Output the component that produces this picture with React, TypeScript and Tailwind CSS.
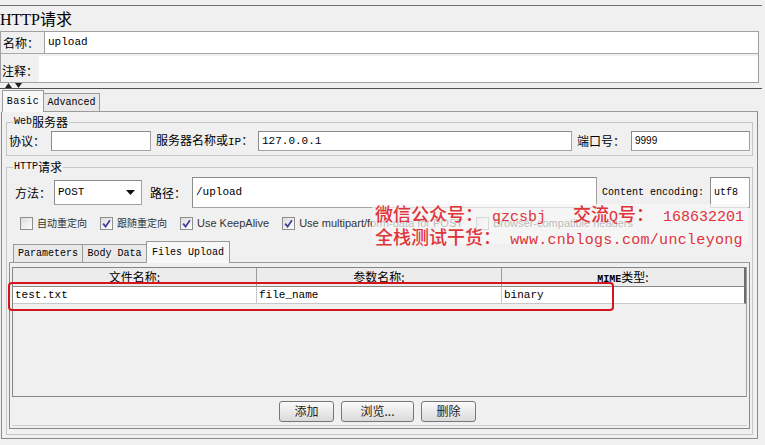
import React from "react";

const mono = "font-['Liberation_Mono','Noto_Sans_CJK_SC',monospace]";
const input = "bg-white border border-[#a3a3a3] border-t-[#8c8c8c] border-l-[#8c8c8c]";

function Check({ checked }: { checked?: boolean }) {
  return (
    <span className="w-[13px] h-[13px] shrink-0 border border-[#8e8f8f] bg-linear-to-br from-[#dcdcdc] to-white flex items-center justify-center">
      {checked && (
        <svg width="9" height="9" viewBox="0 0 9 9">
          <path d="M1.2 4.6 L3.6 7.6 L7.9 1.2" fill="none" stroke="#3c3c94" strokeWidth="1.7" />
        </svg>
      )}
    </span>
  );
}

function Button({ label, wide }: { label: string; wide?: boolean }) {
  return (
    <div
      className={`h-[21px] ${wide ? "w-[73px]" : "w-[55px]"} rounded-[3px] border border-[#777] bg-linear-to-b from-[#fafafa] to-[#dadada] flex items-center justify-center text-[12px] leading-none text-[#222]`}
    >
      {label}
    </div>
  );
}

export default function App() {
  return (
    <div className="w-[765px] h-[445px] bg-[#f0f0f0] overflow-hidden relative text-black text-[12px] font-['Noto_Sans_CJK_SC',sans-serif]">
      <div className="h-[5px]" />
      <div className="mr-[3px] border-t border-[#6f6f6f]">
        <div className="h-[25px] text-[16px] leading-[25px]">
          <span className="font-['Liberation_Serif',serif]">HTTP</span>请求
        </div>

        {/* name / comment */}
        <div className="mr-[3px] border-t border-r border-l border-[#a0a0a0]">
          <div className="flex h-[22px] border-b border-[#a8a8a8]">
            <div className="w-[43px] pl-[2px] leading-[22px] whitespace-nowrap">名称：</div>
            <div className={`flex-1 bg-white border-l border-[#a0a0a0] pl-[3px] leading-[21px] text-[11px] ${mono}`}>upload</div>
          </div>
          <div className="flex h-[29px] border-b border-[#a0a0a0]">
            <div className="w-[38px] pl-[1px] pt-[9px] leading-[16px] whitespace-nowrap">注释：</div>
            <div className="flex-1 bg-white mt-[2px]" />
          </div>
        </div>
        <div className="h-[5px] flex items-center gap-[3px] pl-[5px]">
          <svg width="7" height="5" viewBox="0 0 7 5"><path d="M0 5 L3.5 0 L7 5 Z" fill="#222" /></svg>
          <svg width="7" height="5" viewBox="0 0 7 5"><path d="M0 0 L3.5 5 L7 0 Z" fill="#222" /></svg>
        </div>
      </div>
      <div className="border-t border-[#505050] mr-[3px]" />

      {/* main tabs */}
      <div className={`flex items-end h-[23px] pl-[2px] mr-[7px] text-[10px] ${mono}`}>
        <div className="h-[22px] w-[42px] bg-[#f8f8f8] border-t border-l border-r border-[#9a9a9a] flex items-center justify-center tracking-[0.5px]">Basic</div>
        <div className="h-[19px] w-[56px] bg-[#e9e9e9] border-t border-r border-b border-[#9a9a9a] flex items-center justify-center">Advanced</div>
        <div className="flex-1 border-b border-[#9a9a9a]" />
      </div>

      <div className="ml-[1px] w-[757px] border-l border-r border-b border-[#8a8a8a] px-[3px] pt-[3px] pb-[3px]">
        <fieldset className="border border-[#c6c6c6] mx-[1px] px-[2px] pb-[3px]">
          <legend className="ml-[4px] px-[1px] h-[14px] flex items-center leading-[14px]">
            <span className={`text-[10px] ${mono}`}>Web</span>服务器
          </legend>
          <div className="mt-[1px] h-[22px] flex items-center">
            <div className="w-[42px]">协议：</div>
            <div className={`w-[100px] h-[20px] ${input}`} />
            <div className="w-[102px] ml-[5px] whitespace-nowrap">
              服务器名称或<span className={`text-[11px] ${mono}`}>IP</span>：
            </div>
            <div className={`flex-1 h-[20px] ${input} pl-[3px] leading-[18px] text-[11px] ${mono}`}>127.0.0.1</div>
            <div className="w-[54px] ml-[5px]">端口号：</div>
            <div className={`w-[119px] h-[20px] ${input} pl-[3px] leading-[18px] text-[10px] font-['Liberation_Sans',sans-serif]`}>9999</div>
          </div>
        </fieldset>

        <fieldset className="mt-[4px] border border-[#c6c6c6] mx-[1px] px-[2px] pb-[5px]">
          <legend className="ml-[4px] px-[1px] h-[14px] flex items-center leading-[14px]">
            <span className={`text-[10px] ${mono}`}>HTTP</span>请求
          </legend>

          <div className="mt-[3px] h-[31px] flex items-center">
            <div className="w-[45px] pl-[6px]">方法：</div>
            <div className={`w-[88px] h-[25px] ${input} flex items-center pl-[3px] pr-[6px] text-[11px] ${mono}`}>
              <span className="flex-1">POST</span>
              <svg width="9" height="5" viewBox="0 0 9 5"><path d="M0 0 L9 0 L4.5 5 Z" fill="#111" /></svg>
            </div>
            <div className="w-[42px] ml-[8px]">路径：</div>
            <div className={`flex-1 h-[31px] ${input} pl-[3px] leading-[29px] text-[11px] ${mono}`}>/upload</div>
            <div className={`w-[108px] ml-[5px] text-[10px] ${mono}`}>Content encoding:</div>
            <div className={`w-[40px] h-[31px] ${input} pl-[3px] leading-[29px] text-[10px] ${mono}`}>utf8</div>
          </div>

          <div className="mt-[5px] h-[20px] flex items-center gap-[13px] pl-[11px] text-[#333]">
            <div className="flex items-center gap-[4px]"><Check /><span className="text-[10px] leading-[12px]">自动重定向</span></div>
            <div className="flex items-center gap-[4px]"><Check checked /><span className="text-[10px] leading-[12px]">跟随重定向</span></div>
            <div className="flex items-center gap-[4px] font-['Liberation_Sans',sans-serif] text-[11px] leading-[13px]"><Check checked /><span>Use KeepAlive</span></div>
            <div className="flex items-center gap-[4px] font-['Liberation_Sans',sans-serif] text-[11px] leading-[13px]"><Check checked /><span>Use multipart/form-data for POST</span></div>
            <div className="flex items-center gap-[4px] font-['Liberation_Sans',sans-serif] text-[11px] leading-[13px]"><Check /><span>Browser-compatible headers</span></div>
          </div>

          {/* sub tabs */}
          <div className={`mt-[8px] flex items-end h-[22px] text-[10px] ${mono}`}>
            <div className="w-[4px] border-b border-[#9a9a9a]" />
            <div className="h-[19px] w-[69px] bg-[#e9e9e9] border-t border-l border-b border-[#9a9a9a] flex items-center justify-center">Parameters</div>
            <div className="h-[19px] w-[64px] bg-[#e9e9e9] border-t border-l border-b border-[#9a9a9a] flex items-center justify-center">Body Data</div>
            <div className="h-[22px] w-[84px] bg-[#f8f8f8] border-t border-l border-r border-[#9a9a9a] flex items-center justify-center">Files Upload</div>
            <div className="flex-1 border-b border-[#9a9a9a]" />
          </div>

          <div className="h-[166px] border-l border-r border-b border-[#8a8a8a] px-[2px] pt-[4px] pb-[2px] flex flex-col">
            <div className="h-[130px] border border-[#858585] border-r-[#a0a0a0]">
              <div className="grid grid-cols-[244px_245px_1fr] h-[19px] bg-[#ececec] border-b border-[#8a8a8a] border-r-2 border-r-[#6c6c6c] leading-[18px]">
                <div className="text-center border-r border-[#9d9d9d]">文件名称:</div>
                <div className="text-center border-r border-[#9d9d9d]">参数名称:</div>
                <div className="text-center"><span className={`text-[10px] font-bold ${mono}`}>MIME</span>类型:</div>
              </div>
              <div className={`grid grid-cols-[244px_245px_1fr] h-[17px] bg-white border-b border-[#c8c8c8] border-r-2 border-r-[#6c6c6c] text-[11px] leading-[16px] ${mono}`}>
                <div className="pl-[2px] border-r border-[#c8c8c8]">test.txt</div>
                <div className="pl-[2px] border-r border-[#c8c8c8]">file_name</div>
                <div className="pl-[2px]">binary</div>
              </div>
            </div>
            <div className="flex-1 border-b border-[#cfcfcf] flex items-center justify-center gap-[7px] pr-[4px]">
              <Button label="添加" />
              <Button label="浏览..." wide />
              <Button label="删除" />
            </div>
          </div>
        </fieldset>
      </div>

      {/* watermark overlay */}
      <div className="absolute left-[372px] top-[204px] w-[376px] h-[40px] bg-[#f6f6f6]/70 text-[#e0333a] leading-[19px] whitespace-pre pl-[3px] font-medium">
        <div>
          <span className="text-[18px]">微信公众号：</span>
          <span className={`text-[15px] ${mono}`}> qzcsbj   </span>
          <span className="text-[18px]">交流</span>
          <span className={`text-[15px] ${mono}`}>Q</span>
          <span className="text-[18px]">号：</span>
          <span className={`text-[15px] ${mono}`}> 168632201</span>
        </div>
        <div>
          <span className="text-[18px]">全栈测试干货：</span>
          <span className={`text-[15px] tracking-[0.3px] ${mono}`}> www.cnblogs.com/uncleyong</span>
        </div>
      </div>

      {/* red annotation */}
      <div className="absolute left-[8px] top-[282px] w-[606px] h-[29px] border-2 border-[#d4151b] rounded-[4px]" />
    </div>
  );
}
